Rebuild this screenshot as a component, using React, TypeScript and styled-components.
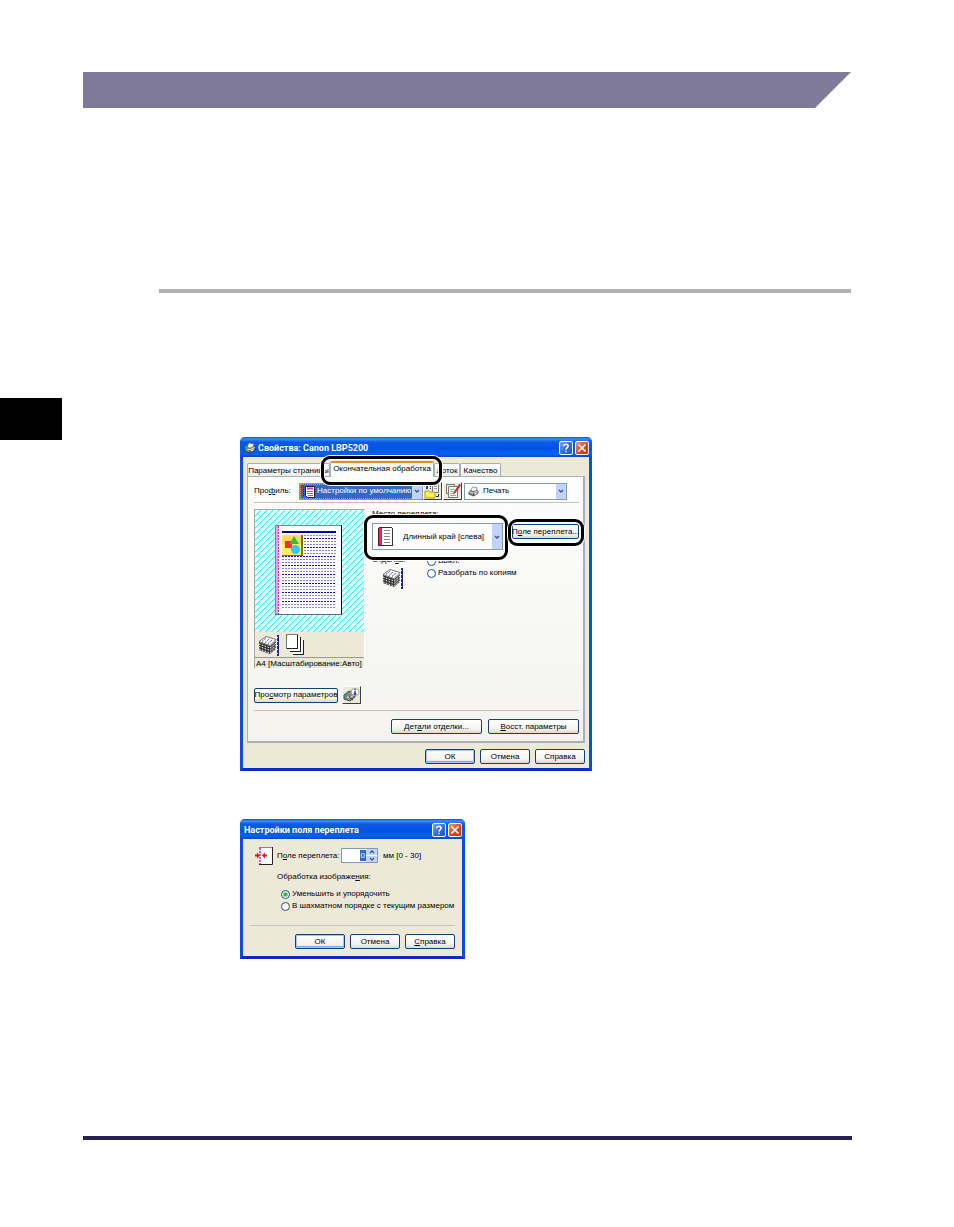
import React from 'react';
import styled, { createGlobalStyle, css } from 'styled-components';

const GlobalStyle = createGlobalStyle`
  *, *::before, *::after { box-sizing: border-box; }
  body { margin: 0; background: #fff; }
  body, button, input, select { font-family: "Liberation Sans", Arial, sans-serif; font-size: 8px; line-height: 10px; color: #000; }
  h1, p { margin: 0; }
  svg { display: block; flex: none; }
`;

/* ---------- manual page ---------- */

const Page = styled.div`
  display: flex;
  flex-direction: column;
  padding-top: 72px;
  padding-bottom: 87px;
`;

const Banner = styled.header`
  height: 36px;
  margin: 0 103px 0 83px;
  background: #7f7a99;
  clip-path: polygon(0 0, 100% 0, calc(100% - 36px) 100%, 0 100%);
`;

const SectionRule = styled.div`
  height: 4px;
  margin: 181px 103px 0 159px;
  background: #b2b2b2;
`;

const Content = styled.main`
  display: flex;
  align-items: flex-start;
  margin-top: 105px;
`;

const ChapterTab = styled.div`
  flex: none;
  width: 62px;
  height: 42px;
  background: #000;
`;

const Figures = styled.div`
  display: flex;
  flex-direction: column;
  gap: 48px;
  padding-top: 39px;
  margin-left: 178px;
`;

const FooterRule = styled.footer`
  height: 4px;
  margin: 177px 102px 0 83px;
  background: #261f52;
`;

/* ---------- window parts ---------- */

const Window = styled.section<{ $width: number }>`
  width: ${p => p.$width}px;
  border: solid #0a4fdc;
  border-width: 0 3px 3px;
  border-bottom-color: #0830b8;
  border-radius: 5px 5px 0 0;
  background: #ece9d8;
`;

const TitleBar = styled.header`
  display: flex;
  align-items: center;
  gap: 2px;
  height: 20px;
  margin: 0 -3px;
  padding: 2px 3px 0 4px;
  border-radius: 5px 5px 0 0;
  background: linear-gradient(#0a50d0 0, #3f8ff8 2px, #0a5ae6 5px, #0054e3 12px, #0661f2 17px, #0348c4 20px);
`;

const Title = styled.h1`
  flex: 1;
  font: bold 9px/12px Roboto, "Liberation Sans", sans-serif;
  color: #fff;
  white-space: nowrap;
`;

const CaptionButton = styled.button<{ $close?: boolean }>`
  display: grid;
  place-items: center;
  width: 14px;
  height: 14px;
  padding: 0;
  border: 1px solid #fff;
  border-radius: 2px;
  color: #fff;
  background: ${p => (p.$close ? 'linear-gradient(135deg, #f0937a, #d9431c 60%, #c23a15)' : 'linear-gradient(135deg, #7fa5f5, #2f62dd 60%, #2456cf)')};
`;

const PushButton = styled.button<{ $width: number; $default?: boolean }>`
  display: flex;
  align-items: center;
  justify-content: center;
  width: ${p => p.$width}px;
  height: 15px;
  padding: 0;
  border: 1px solid #0f4377;
  border-radius: 2px;
  white-space: pre;
  background: linear-gradient(#fff, #f3f2ec 70%, #dcd8cb);
  ${p => p.$default && css`box-shadow: inset 0 0 0 1px #a9c3f2, inset 0 -2px 0 #8aa8e8;`}
`;

const ButtonRow = styled.div<{ $pad: string; $gap: number }>`
  display: flex;
  justify-content: flex-end;
  gap: ${p => p.$gap}px;
  padding: ${p => p.$pad};
`;

const Divider = styled.div<{ $gap: string }>`
  height: 1px;
  margin: ${p => p.$gap};
  background: #c5c3b8;
`;

const RadioLabel = styled.label`
  display: flex;
  align-items: center;
  gap: 2px;
  height: 12px;
  white-space: nowrap;
`;

const Radio = styled.input.attrs({ type: 'radio' })`
  appearance: none;
  flex: none;
  width: 9px;
  height: 9px;
  margin: 0;
  border: 1px solid #1f5286;
  border-radius: 50%;
  background: #fafaf7;
  &:checked { background: radial-gradient(circle, #21b121 0 1px, #fafaf7 3px); }
`;

/* Thick outline drawn over the dialog to call out a control */
const Callout = styled.span<{ $inset: string }>`
  position: absolute;
  inset: ${p => p.$inset};
  z-index: 2;
  border: 3px solid #000;
  border-radius: 9px;
  box-shadow: 0 0 0 1px #fff, inset 0 0 0 1px #fff;
  pointer-events: none;
`;

const CalloutTarget = styled.div`
  position: relative;
  flex: none;
`;

/* ---------- tabs and panel ---------- */

const TabBar = styled.nav`
  display: flex;
  align-items: flex-end;
  height: 19px;
  padding-left: 4px;
`;

const Tab = styled.button<{ $width: number; $active?: boolean }>`
  display: block;
  width: ${p => p.$width}px;
  height: 13px;
  padding: 1px 0 0;
  border: 1px solid #a5b0b4;
  border-bottom: 0;
  border-radius: 2px 2px 0 0;
  white-space: nowrap;
  background: linear-gradient(#fff, #f0f0ea);
  ${p => p.$active && css`
    position: relative;
    height: 16px;
    padding: 0 0 2px;
    margin-bottom: -1px;
    border-top: 2px solid #e68b2c;
    background: #fcfcfe;
  `}
`;

const Panel = styled.div`
  margin: 0 4px;
  padding: 5px 4px 0 6px;
  border: 1px solid #a5b0b4;
  border-right-width: 2px;
  border-bottom-width: 2px;
  background: linear-gradient(#fdfdfd, #f4f3ee);
`;

const ProfileRow = styled.div`
  display: flex;
  align-items: center;
  height: 18px;
`;

const ProfileLabel = styled.label`
  width: 45px;
`;

const ComboBox = styled.div<{ $width: number; $height: number }>`
  position: relative;
  flex: none;
  display: flex;
  align-items: center;
  width: ${p => p.$width}px;
  height: ${p => p.$height}px;
  border: 1px solid #7f9db9;
  background: #fff;
`;

const Select = styled.select<{ $indent: number; $selected?: boolean }>`
  appearance: none;
  width: 100%;
  height: 100%;
  padding: 0 10px 0 ${p => p.$indent}px;
  border: 0;
  border-radius: 0;
  outline: 0;
  background: transparent;
  ${p => p.$selected && css`
    color: #fff;
    background: linear-gradient(#316ac5, #316ac5) 0 0 / calc(100% - 10px) 100% no-repeat;
    outline: 1px dotted #d8a848;
    outline-offset: -1px;
  `}
`;

const ComboIcon = styled.span<{ $left: number }>`
  position: absolute;
  left: ${p => p.$left}px;
  pointer-events: none;
`;

const ComboArrow = styled.span`
  position: absolute;
  top: 0;
  right: 0;
  bottom: 0;
  display: grid;
  place-items: center;
  width: 10px;
  border-radius: 1px;
  background: #c1d3fb;
  pointer-events: none;
`;

const ToolButton = styled.button<{ $gap?: number }>`
  display: grid;
  place-items: center;
  flex: none;
  width: 19px;
  height: 18px;
  padding: 0;
  margin-left: ${p => p.$gap || 0}px;
  border: 1px solid #fff;
  border-right-color: #404040;
  border-bottom-color: #404040;
  background: #ece9d8;
`;

const Push = styled.div`
  margin-left: 2px;
`;

const Columns = styled.div`
  display: flex;
  align-items: flex-start;
  height: 177px;
`;

const PreviewBox = styled.figure`
  flex: none;
  width: 111px;
  height: 160px;
  margin: 0;
  border: 1px solid #aca899;
  border-color: #aca899 #fff #fff #aca899;
  background: #ece9d8;
`;

const PreviewIcons = styled.div`
  display: flex;
  align-items: center;
  gap: 6px;
  height: 25px;
  padding-left: 3px;
`;

const PreviewCaption = styled.figcaption`
  border-top: 1px solid #9d9a8d;
  padding: 1px 1px 0;
  white-space: nowrap;
`;

const Options = styled.div`
  flex: 1;
  padding-left: 7px;
`;

const OptionsTop = styled.div`
  display: flex;
  align-items: flex-start;
  gap: 9px;
  padding-top: 4px;
`;

const ButtonDrop = styled.div`
  padding-top: 1px;
`;

const FinishingRow = styled.div`
  display: flex;
  align-items: flex-start;
  gap: 22px;
  padding-top: 5px;
`;

const FinishingName = styled.div`
  display: flex;
  flex-direction: column;
  gap: 2px;
  width: 33px;
`;

const FinishingIcon = styled.div`
  padding-left: 10px;
`;

const SettingsRow = styled.div`
  display: flex;
  align-items: center;
  gap: 4px;
`;

/* ---------- gutter dialog ---------- */

const GutterBody = styled.div`
  padding: 7px 7px 7px;
`;

const GutterRow = styled.div`
  display: flex;
  align-items: center;
  padding-left: 5px;
  height: 19px;
`;

const GutterLabel = styled.label`
  width: 68px;
  padding-left: 4px;
  white-space: nowrap;
`;

const SpinBox = styled.div`
  display: flex;
  width: 37px;
  height: 15px;
  margin-right: 5px;
  border: 1px solid #7f9db9;
  background: #fff;
`;

const NumberField = styled.input`
  flex: 1;
  width: 0;
  padding: 0 1px 0 0;
  border: 0;
  outline: 0;
  text-align: right;
  color: #fff;
  background: linear-gradient(#316ac5, #316ac5) right 0 center / 6px 11px no-repeat;
`;

const SpinButtons = styled.div`
  display: flex;
  flex-direction: column;
  width: 11px;
  gap: 1px;
`;

const SpinButton = styled.button`
  display: grid;
  place-items: center;
  flex: 1;
  padding: 0;
  border: 0;
  border-radius: 1px;
  background: #c1d3fb;
`;

const ImageOptions = styled.fieldset`
  margin: 0;
  padding: 7px 0 0 27px;
  border: 0;
`;

const Legend = styled.legend`
  float: left;
  width: 100%;
  padding: 0;
  margin-bottom: 6px;
`;

const RadioStack = styled.div<{ $indent?: number }>`
  clear: both;
  display: flex;
  flex-direction: column;
  padding-left: ${p => p.$indent || 0}px;
`;

/* ---------- drawings ---------- */

const Chevron = ({ up }: { up?: boolean }) => (
  <svg width="6" height="4" viewBox="0 0 6 4">
    <path d={up ? 'M1 3L3 1L5 3' : 'M1 1L3 3L5 1'} fill="none" stroke="#3d5384" strokeWidth="1.3" />
  </svg>
);

const QuestionMark = () => (
  <svg width="10" height="10" viewBox="0 0 10 10" fill="none" stroke="#fff" strokeWidth="1.5">
    <path d="M2.8 3.2C2.8 .8 7.2 .8 7.2 3C7.2 4.6 5 4.6 5 6.8M5 7.8V9.2" />
  </svg>
);

const Cross = () => (
  <svg width="10" height="10" viewBox="0 0 10 10" stroke="#fff" strokeWidth="1.7">
    <path d="M1.5 1.5L8.5 8.5M8.5 1.5L1.5 8.5" />
  </svg>
);

const PrinterIcon = ({ size = 12, green }: { size?: number; green?: boolean }) => (
  <svg width={size} height={size} viewBox="0 0 12 12">
    <path d="M1 6L6 3L11 5V8L6 11L1 9Z" fill="#8a8a8a" stroke="#333" strokeWidth=".7" />
    <path d="M3 5L5 1L10 2L9 5L6 6Z" fill="#fff" stroke="#666" strokeWidth=".7" />
    <path d="M1 6L6 8L11 5" fill="none" stroke="#ddd" />
    <path d="M6 8V11" stroke="#222" strokeWidth=".7" />
    <path d="M7 9L10 7.5" stroke="#eee" />
    {green && <path d="M1 4H4V7H1Z" fill="#2bb04a" />}
  </svg>
);

const ProfileIcon = () => (
  <svg width="15" height="13" viewBox="0 0 15 13">
    <path d="M4.500 1.500H13.500V12.500H6.500L4.500 10.500Z" fill="#fff" stroke="#222" />
    <path d="M6 3.500H12" stroke="#d838b8" strokeWidth="2" />
    <path d="M6 6.500H12M6 8.500H12M7 10.500H12" stroke="#8a6a9a" />
    <path d="M0 0H3V3L2 4L0 2Z" fill="#e01010" />
    <path d="M2.500 4V12" stroke="#222" strokeDasharray="1 1" />
  </svg>
);

const SaveProfileIcon = () => (
  <svg width="17" height="16" viewBox="0 0 17 16">
    <path d="M8.500 1.500H14.500V9.500H8.500Z" fill="#f2f2f2" stroke="#777" />
    <path d="M10 3.500H13M10 5.500H13" stroke="#999" />
    <path d="M1 1H6V3H4V6H2V3H1Z" fill="#1648d8" />
    <path d="M1 8H5L6 9H11V15H1Z" fill="#ffe84a" stroke="#a89000" strokeWidth=".8" />
    <path d="M2 10L5 12H9" stroke="#fff8c0" fill="none" />
    <path d="M14.500 11V13.500H12" stroke="#222" fill="none" />
    <path d="M6.500 3V7" stroke="#333" strokeDasharray="1 1" />
  </svg>
);

const EditProfileIcon = () => (
  <svg width="17" height="16" viewBox="0 0 17 16">
    <path d="M2.500 1.500H10.500V10.500H2.500Z" fill="#eee" stroke="#777" />
    <path d="M4.500 3.500H13.500V14.500H4.500Z" fill="#f7f7f7" stroke="#777" />
    <path d="M6 6.500H10M6 8.500H9M6 10.500H9M6 12.500H12" stroke="#8bb88b" />
    <path d="M15.500 1L10 9L9.500 11L11 10L16.500 2.500Z" fill="#e6202c" stroke="#a01828" strokeWidth=".5" />
  </svg>
);

const BookIcon = () => (
  <svg width="16" height="20" viewBox="0 0 16 20" shapeRendering="crispEdges">
    <path d="M1 1H14V19H1Z" fill="#fff" />
    <path d="M1 0H14V1H1ZM1 18H15V19H1ZM14 1H15V19H14Z" fill="#333" />
    <path d="M1 1H4V18H1Z" fill="#f02050" />
    <path d="M0 1H1V19H0Z" fill="#7a1030" />
    <path d="M6 3.500H12M6 6.500H12M6 9.500H12M6 12.500H12M6 15.500H12" stroke="#888" />
  </svg>
);

const StackIcon = () => (
  <svg width="22" height="22" viewBox="0 0 22 22">
    <path d="M1 8L12 12V20L1 16Z" fill="#333" />
    <path d="M12 12L18 7V15L12 20Z" fill="#555" />
    <path d="M1 10L12 14L18 9M1 12.500L12 16.500L18 11.500M1 15L12 19L18 14" fill="none" stroke="#fff" strokeDasharray="1.500 1.500" />
    <path d="M1 7.500L8 2.500L18 5.500L12 11.500Z" fill="#fff" stroke="#555" strokeWidth=".8" />
    <path d="M4 7.500L8 4M7 8.500L11 5M10 9.500L14 6" stroke="#3a3ab0" strokeDasharray="2 1" />
    <path d="M20 1V22" stroke="#20209a" strokeWidth="2" />
    <path d="M21.500 2V22" stroke="#fff" strokeDasharray="1 2" />
    <path d="M19.500 3V22" stroke="#fff" strokeDasharray="1 3" />
  </svg>
);

const PagesIcon = () => (
  <svg width="20" height="21" viewBox="0 0 20 21" shapeRendering="crispEdges" fill="#fff">
    <path d="M7 6H17V20H7Z" /><path d="M7 20.500H17.500V6" fill="none" stroke="#222" />
    <path d="M4 3H14V17H4Z" /><path d="M4 17.500H14.500V3" fill="none" stroke="#222" />
    <path d="M.500 .500H11.500V14.500H.500Z" stroke="#777" /><path d="M1 14.500H11.500V1" fill="none" stroke="#222" />
  </svg>
);

const PrinterInfoIcon = () => (
  <svg width="17" height="14" viewBox="0 0 17 14">
    <path d="M1 7L6 3L12 5V9L7 13L1 11Z" fill="#888" stroke="#333" strokeWidth=".8" />
    <path d="M2 8L7 10L12 6" fill="none" stroke="#eee" />
    <path d="M1 7H4V9H1Z" fill="#27a060" />
    <path d="M6 9L10 12" stroke="#222" />
    <ellipse cx="12" cy="4" rx="4" ry="3.500" fill="#fff" stroke="#778" strokeWidth=".7" />
    <path d="M12 1V2.300M12 3V6M10.800 6H13.200" stroke="#1414d8" strokeWidth="1.300" />
  </svg>
);

const GutterIcon = () => (
  <svg width="18" height="18" viewBox="0 0 18 18">
    <path d="M4 1H17V17H4Z" fill="#fff" />
    <path d="M4 .5H17" fill="none" stroke="#888" />
    <path d="M4 17.500H17.500V0" fill="none" stroke="#222" />
    <path d="M5 1V17" stroke="#e44be0" strokeWidth="2" strokeDasharray="2 1" />
    <path d="M0 7.500H2V5.500L5 8.500L2 11.500V9.500H0ZM12 7.500H10V5.500L7 8.500L10 11.500V9.500H12Z" fill="#ee1010" />
  </svg>
);

const textLines = Array.from({ length: 25 }, (_, i) => 25.5 + i * 3);

const PagePreview = () => (
  <svg width="109" height="122" viewBox="0 0 109 122" shapeRendering="crispEdges">
    <defs>
      <pattern id="hatch" width="6" height="6" patternUnits="userSpaceOnUse">
        <rect width="6" height="6" fill="#e8ffff" />
        <path d="M0 5h1v1h-1zM1 4h1v1h-1zM2 3h1v1h-1zM3 2h1v1h-1zM4 1h1v1h-1zM5 0h1v1h-1z" fill="#2ff4f8" />
        <path d="M1 5h1v1h-1zM2 4h1v1h-1zM3 3h1v1h-1zM4 2h1v1h-1zM5 1h1v1h-1zM0 0h1v1h-1z" fill="#9cf8fb" />
        <path d="M4 5h1v1h-1zM0 3h1v1h-1zM2 1h1v1h-1z" fill="#b8fbfd" />
      </pattern>
    </defs>
    <rect width="109" height="122" fill="url(#hatch)" />
    <path d="M21 15H87V105H21Z" fill="#fff" />
    <path d="M20 15H87V16H20ZM20 15H21V105H20Z" fill="#888" />
    <path d="M86 15H87V105H86Z" fill="#000" />
    <path d="M20 104H87V105H20Z" fill="#666" />
    <path d="M22 16V104" stroke="#f59af0" strokeWidth="2" />
    <path d="M23.500 16V104" stroke="#d422cc" strokeDasharray="2 1" />
    <path d="M27 21H81V23H27Z" fill="#0000a8" />
    {textLines.map((y, i) => (
      <path key={y} d={`M${i < 7 ? 49 : 27} ${y}H81`} stroke={i % 3 === 1 ? '#1010b8' : '#8080ee'} strokeDasharray="2 1" />
    ))}
    <path d="M27 25H47V46H27Z" fill="#ffd966" />
    <path d="M27 34H47V45H27Z" fill="#fff066" />
    <path d="M46 25H48V46H46ZM27 45H48V46H27Z" fill="#8a6d10" />
    <path d="M30 31H37V38H30Z" fill="#f53030" />
    <g shapeRendering="auto">
      <path d="M39 26L44 34H34.500Z" fill="#30c030" />
      <circle cx="40.500" cy="39.500" r="4.500" fill="#30c8f8" />
    </g>
  </svg>
);

/* ---------- dialogs ---------- */

const CaptionButtons = () => (
  <>
    <CaptionButton aria-label="Справка"><QuestionMark /></CaptionButton>
    <CaptionButton $close aria-label="Закрыть"><Cross /></CaptionButton>
  </>
);

function PropertiesDialog() {
  return (
    <Window $width={352}>
      <TitleBar>
        <PrinterIcon green />
        <Title>Свойства: Canon LBP5200</Title>
        <CaptionButtons />
      </TitleBar>
      <TabBar>
        <Tab $width={83}>Параметры страницы</Tab>
        <CalloutTarget>
          <Tab $width={104} $active>Окончательная обработка</Tab>
          <Callout $inset="-5px -8px -9px -9px" />
        </CalloutTarget>
        <Tab $width={26}>Лоток</Tab>
        <Tab $width={41}>Качество</Tab>
      </TabBar>
      <Panel>
        <ProfileRow>
          <ProfileLabel htmlFor="profile">Про<u>ф</u>иль:</ProfileLabel>
          <ComboBox $width={124} $height={17}>
            <Select id="profile" $indent={17} $selected><option>Настройки по умолчанию</option></Select>
            <ComboIcon $left={1}><ProfileIcon /></ComboIcon>
            <ComboArrow><Chevron /></ComboArrow>
          </ComboBox>
          <ToolButton aria-label="Добавить профиль"><SaveProfileIcon /></ToolButton>
          <ToolButton $gap={1} aria-label="Изменить профиль"><EditProfileIcon /></ToolButton>
          <Push>
            <ComboBox $width={103} $height={17}>
              <Select aria-label="Способ вывода" $indent={18}><option>Печать</option></Select>
              <ComboIcon $left={3}><PrinterIcon size={11} /></ComboIcon>
              <ComboArrow><Chevron /></ComboArrow>
            </ComboBox>
          </Push>
        </ProfileRow>
        <Divider $gap="2px 0 6px" />
        <Columns>
          <PreviewBox>
            <PagePreview />
            <PreviewIcons><StackIcon /><PagesIcon /></PreviewIcons>
            <PreviewCaption>A4 [Масштабирование:Авто]</PreviewCaption>
          </PreviewBox>
          <Options>
            <label htmlFor="binding">Место переплета:</label>
            <OptionsTop>
              <CalloutTarget>
                <ComboBox $width={131} $height={27}>
                  <Select id="binding" $indent={30}><option>Длинный край [слева]</option></Select>
                  <ComboIcon $left={5}><BookIcon /></ComboIcon>
                  <ComboArrow><Chevron /></ComboArrow>
                </ComboBox>
                <Callout $inset="-8px -5px -10px -8px" />
              </CalloutTarget>
              <ButtonDrop>
                <CalloutTarget>
                  <PushButton $width={67}>П<u>о</u>ле переплета...</PushButton>
                  <Callout $inset="-5px -5px -7px -4px" />
                </CalloutTarget>
              </ButtonDrop>
            </OptionsTop>
            <FinishingRow>
              <FinishingName>
                <span>Отдел<u>к</u>а:</span>
                <FinishingIcon><StackIcon /></FinishingIcon>
              </FinishingName>
              <RadioStack>
                <RadioLabel><Radio name="finishing" />Выкл.</RadioLabel>
                <RadioLabel><Radio name="finishing" />Разобрать по копиям</RadioLabel>
              </RadioStack>
            </FinishingRow>
          </Options>
        </Columns>
        <SettingsRow>
          <PushButton $width={84}>Про<u>с</u>мотр параметров</PushButton>
          <ToolButton aria-label="Сведения о принтере"><PrinterInfoIcon /></ToolButton>
        </SettingsRow>
        <Divider $gap="6px 0 8px" />
        <ButtonRow $pad="0 0 7px" $gap={6}>
          <PushButton $width={91}>Дет<u>а</u>ли отделки...</PushButton>
          <PushButton $width={91}><u>В</u>осст. параметры</PushButton>
        </ButtonRow>
      </Panel>
      <ButtonRow $pad="6px 4px 4px" $gap={5}>
        <PushButton $width={50} $default>ОК</PushButton>
        <PushButton $width={50}>Отмена</PushButton>
        <PushButton $width={50}>Справка</PushButton>
      </ButtonRow>
    </Window>
  );
}

function GutterDialog() {
  return (
    <Window $width={225}>
      <TitleBar>
        <Title>Настройки поля переплета</Title>
        <CaptionButtons />
      </TitleBar>
      <GutterBody>
        <GutterRow>
          <GutterIcon />
          <GutterLabel htmlFor="gutter">П<u>о</u>ле переплета:</GutterLabel>
          <SpinBox>
            <NumberField id="gutter" defaultValue="0" />
            <SpinButtons>
              <SpinButton aria-label="Больше"><Chevron up /></SpinButton>
              <SpinButton aria-label="Меньше"><Chevron /></SpinButton>
            </SpinButtons>
          </SpinBox>
          мм [0 - 30]
        </GutterRow>
        <ImageOptions>
          <Legend>Обработка изображе<u>н</u>ия:</Legend>
          <RadioStack $indent={4}>
            <RadioLabel><Radio name="processing" defaultChecked />Уменьшить и упорядочить</RadioLabel>
            <RadioLabel><Radio name="processing" />В шахматном порядке с текущим размером</RadioLabel>
          </RadioStack>
        </ImageOptions>
        <Divider $gap="13px 0 8px" />
        <ButtonRow $pad="0" $gap={5}>
          <PushButton $width={50} $default>ОК</PushButton>
          <PushButton $width={50}>Отмена</PushButton>
          <PushButton $width={50}><u>С</u>правка</PushButton>
        </ButtonRow>
      </GutterBody>
    </Window>
  );
}

export default function App() {
  return (
    <>
      <GlobalStyle />
      <Page>
        <Banner />
        <SectionRule />
        <Content>
          <ChapterTab />
          <Figures>
            <PropertiesDialog />
            <GutterDialog />
          </Figures>
        </Content>
        <FooterRule />
      </Page>
    </>
  );
}
